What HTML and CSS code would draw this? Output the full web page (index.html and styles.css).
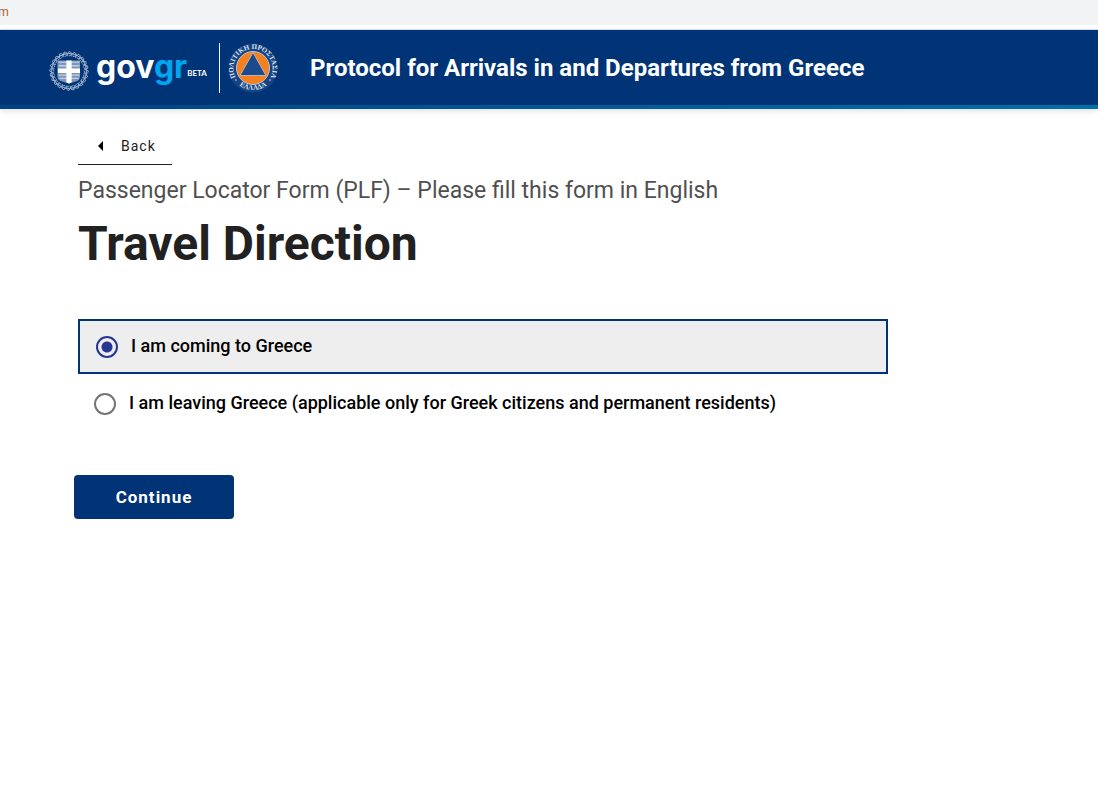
FILE: index.html
```html
<!DOCTYPE html>
<html lang="en">
<head>
    <meta charset="UTF-8">
    <meta name="viewport" content="width=device-width, initial-scale=1.0">
    <title>Travel Direction</title>
    <link rel="stylesheet" href="styles.css">
</head>
<body>
    <div class="top-strip"><span>m</span></div>

    <header class="header">
        <a href="#" class="logo">
            <svg class="emblem" viewBox="0 0 40 40" aria-hidden="true">
                <defs>
                    <g id="leaf">
                        <path d="M20 1.500q2 .2 3 2-2 .6-3.500-.6zM20 5.500q2 .2 2.800-1.500M19.500 2.500q-1.500 1.500-.5 3.500" fill="none" stroke="#a3b5cf" stroke-width="0.800"/>
                    </g>
                    <g id="branch">
                        <use href="#leaf"/>
                        <use href="#leaf" transform="rotate(15 20 20)"/>
                        <use href="#leaf" transform="rotate(30 20 20)"/>
                        <use href="#leaf" transform="rotate(45 20 20)"/>
                        <use href="#leaf" transform="rotate(60 20 20)"/>
                        <use href="#leaf" transform="rotate(75 20 20)"/>
                    </g>
                </defs>
                <circle cx="20" cy="20" r="16.500" fill="none" stroke="#8da3c3" stroke-width="0.800"/>
                <use href="#branch"/>
                <use href="#branch" transform="rotate(90 20 20)"/>
                <use href="#branch" transform="rotate(180 20 20)"/>
                <use href="#branch" transform="rotate(270 20 20)"/>
                <path d="M9 10h21.500v15q0 4-4 5l-6.500 2-6.500-2q-4.500-1-4.500-5z" fill="#7d96bb"/>
                <path d="M10 11.500h20M10 15h20M10 24h20M11 27h18" stroke="#c3cfe0" stroke-width="1.200"/>
                <path d="M17.500 10h5v7.500h8v4.500h-8v9l-2.500 1-2.500-1v-9h-8v-4.500h8z" fill="#fff"/>
            </svg>
            <span class="logo-text">gov<span class="logo-gr">gr</span></span>
            <span class="beta">BETA</span>
        </a>
        <svg class="civil" viewBox="0 0 50 50" aria-hidden="true">
            <defs>
                <path id="arcTop" d="M7 33A19.500 19.500 0 1 1 43 33"/>
                <path id="arcBottom" d="M9 40.500A23 23 0 0 0 41 40.500"/>
            </defs>
            <circle cx="25" cy="25" r="24.500" fill="#164384"/>
            <circle cx="25" cy="25" r="16.500" fill="#f58020" stroke="#b9c4d6" stroke-width="1"/>
            <path d="M25 9.500L38 32.500H12z" fill="#1c4a8c" stroke="#c0b3ae" stroke-width="1"/>
            <text class="seal-text"><textPath href="#arcTop" startOffset="50%">ΠΟΛΙΤΙΚΗ ΠΡΟΣΤΑΣΙΑ</textPath></text>
            <text class="seal-text"><textPath href="#arcBottom" startOffset="50%">ΕΛΛΑΔΑ</textPath></text>
            <circle cx="8" cy="37" r="0.800" fill="#dde4ee"/>
            <circle cx="42" cy="37" r="0.800" fill="#dde4ee"/>
        </svg>
        <div class="header-title">Protocol for Arrivals in and Departures from Greece</div>
    </header>

    <main class="container">
        <a href="#" class="back">
            <svg class="back-arrow" viewBox="0 0 5 10" aria-hidden="true"><path d="M5 0v10L0 5z"/></svg>
            Back
        </a>
        <form class="form">
            <p class="caption">Passenger Locator Form (PLF) – Please fill this form in English</p>
            <h1>Travel Direction</h1>
            <div class="options">
                <label class="option">
                    <input type="radio" name="direction" value="arrival" checked>
                    <span>I am coming to Greece</span>
                </label>
                <label class="option">
                    <input type="radio" name="direction" value="departure">
                    <span>I am leaving Greece (applicable only for Greek citizens and permanent residents)</span>
                </label>
            </div>
            <button type="button" class="btn">Continue</button>
        </form>
    </main>
</body>
</html>
```

FILE: styles.css
```css
* {
    box-sizing: border-box;
}
body {
    margin: 0;
    font-family: Roboto, sans-serif;
    color: #212121;
    background: #fff;
}
.top-strip {
    height: 25px;
    margin-bottom: 4px;
    background: #f1f3f4;
    color: #b5623a;
    font-family: "Liberation Sans", sans-serif;
    font-size: 13px;
    line-height: 24px;
}
.top-strip span {
    margin-left: -2px;
}
.header {
    display: flex;
    align-items: center;
    height: 80px;
    padding: 0 48px 4px;
    background: linear-gradient(to right, #004283, #0070a8) bottom / 100% 4px no-repeat #003476;
    border-top: 1px solid #d5dde8;
    box-shadow: 0 2px 6px rgba(0, 0, 0, 0.12);
}
.logo {
    display: flex;
    align-items: center;
    height: 50px;
    width: 172px;
    border-right: 1px solid #fff;
    color: #fff;
    text-decoration: none;
}
.emblem {
    flex: none;
    width: 42px;
    height: 42px;
    margin-top: 6px;
}
.logo-text {
    margin-left: 6px;
    font-family: Inter, sans-serif;
    font-size: 32px;
    font-weight: 700;
    line-height: 44px;
    padding-bottom: 2px;
}
.logo-gr {
    color: #00a6f0;
}
.beta {
    font-family: Lato, sans-serif;
    font-size: 8px;
    font-weight: 700;
    margin-top: 10px;
}
.civil {
    flex: none;
    width: 50px;
    height: 50px;
    margin-left: 8px;
}
.seal-text {
    font-family: "Liberation Serif", serif;
    font-size: 7px;
    font-weight: 700;
    fill: #dde4ee;
    text-anchor: middle;
}
.header-title {
    margin-left: 32px;
    color: #fff;
    font-size: 24px;
    font-weight: 700;
}
.container {
    max-width: 966px;
    padding: 20px 78px;
}
.back {
    display: inline-flex;
    align-items: center;
    height: 36px;
    padding: 0 16px 2px 20px;
    border-bottom: 1px solid #212121;
    color: #212121;
    font-size: 14px;
    letter-spacing: 1px;
    text-decoration: none;
}
.back-arrow {
    width: 5px;
    height: 10px;
    margin-right: 18px;
}
.caption {
    margin: 8px 0 0;
    color: #505050;
    font-size: 23px;
    line-height: 36px;
}
h1 {
    margin: 5px 0 0;
    font-size: 48px;
    font-weight: 700;
    line-height: 60px;
}
.options {
    display: flex;
    flex-direction: column;
    gap: 2px;
    margin-top: 45px;
}
.option {
    display: flex;
    align-items: center;
    height: 55px;
    padding: 0 16px;
    color: #000;
    font-size: 18px;
    font-weight: 500;
    cursor: pointer;
}
.option span {
    padding-bottom: 2px;
}
.option:has(input:checked) {
    border: 2px solid #003476;
    background: #eee;
}
.option input {
    appearance: none;
    width: 22px;
    height: 22px;
    margin: 0 13px 0 0;
    border: 2px solid #757575;
    border-radius: 50%;
}
.option input:checked {
    border-color: #283593;
    background: radial-gradient(circle, #283593 5px, transparent 6px);
}
.btn {
    display: block;
    width: 160px;
    height: 44px;
    margin: 44px 0 0 -4px;
    border: none;
    border-radius: 4px;
    background: #003476;
    color: #fff;
    font-family: inherit;
    font-size: 17px;
    font-weight: 700;
    letter-spacing: 1px;
    cursor: pointer;
}
```
